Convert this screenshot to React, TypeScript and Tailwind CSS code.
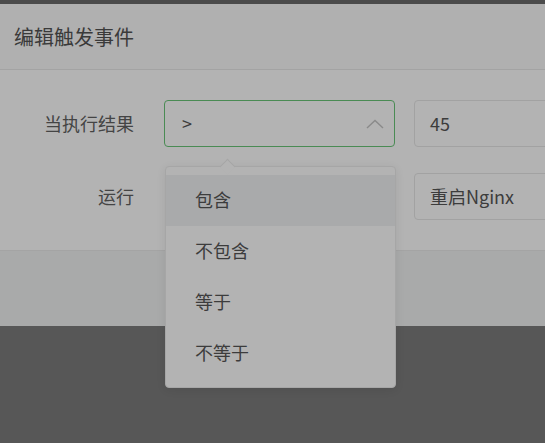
import React from "react";

const font = { fontFamily: '"Noto Sans CJK SC", "Noto Sans", sans-serif' };

export default function App() {
  const items = ["包含", "不包含", "等于", "不等于"];
  return (
    <div className="w-[545px] h-[443px] overflow-hidden bg-[#575757] flex flex-col" style={font}>
      <div className="h-[4px] bg-[#4b4b4b] shrink-0" />
      <div className="w-[600px] flex flex-col bg-[#b3b3b3]">
        <div className="h-[66px] bg-[#b0b0b0] border-b border-[#a3a3a3] flex items-center pl-[14px]">
          <span className="text-[20px] text-[#3a3a3a] leading-none">编辑触发事件</span>
        </div>
        <div className="flex flex-col gap-[26px] pt-[30px] pb-[30px]">
          <div className="flex items-center h-[47px]">
            <div className="w-[134px] text-right text-[18px] text-[#444] leading-none pb-[2px]">当执行结果</div>
            <div className="relative ml-[30px] w-[231px] h-[47px]">
              <div className="w-full h-full rounded-[4px] border border-[#4a8b54] flex items-center justify-between pl-[17px] pr-[10px]">
                <span className="text-[18px] text-[#3c3c3c] leading-none pb-[2px]">&gt;</span>
                <svg width="18" height="10" viewBox="0 0 18 10" fill="none">
                  <polyline points="1,9 9,1.5 17,9" stroke="#8a8a8a" strokeWidth="1.4" />
                </svg>
              </div>
              <div className="absolute left-[1px] top-[66px] w-[231px] h-[222px] rounded-[4px] border border-[#a6a6a6] bg-[#b3b3b3] shadow-[0_2px_10px_rgba(0,0,0,0.08)] z-10 py-[8px]">
                <div className="absolute left-[56px] top-[-6px] w-[11px] h-[11px] rotate-45 bg-[#b3b3b3] border-l border-t border-[#a6a6a6]" />
                {items.map((t, i) => (
                  <div
                    key={t}
                    className={
                      "relative h-[51px] flex items-center pl-[29px] pb-[3px] text-[18px] text-[#3c3c3c] leading-none " +
                      (i === 0 ? "bg-[#a9aaab]" : "")
                    }
                  >
                    {t}
                  </div>
                ))}
              </div>
            </div>
            <div className="ml-[19px] w-[160px] h-[47px] rounded-[4px] border border-[#a2a2a2] flex items-center pl-[15px]">
              <span className="text-[18px] text-[#3c3c3c] leading-none pb-[2px]">45</span>
            </div>
          </div>
          <div className="flex items-center h-[47px]">
            <div className="w-[134px] text-right text-[18px] text-[#444] leading-none pb-[2px]">运行</div>
            <div className="ml-[30px] w-[231px] h-[47px]" />
            <div className="ml-[19px] w-[160px] h-[47px] rounded-[4px] border border-[#a2a2a2] flex items-center pl-[15px]">
              <span className="text-[18px] text-[#3c3c3c] leading-none pb-[2px]">重启Nginx</span>
            </div>
          </div>
        </div>
        <div className="h-[76px] bg-[#a9aaaa] border-t border-[#a4a4a4]" />
      </div>
    </div>
  );
}
